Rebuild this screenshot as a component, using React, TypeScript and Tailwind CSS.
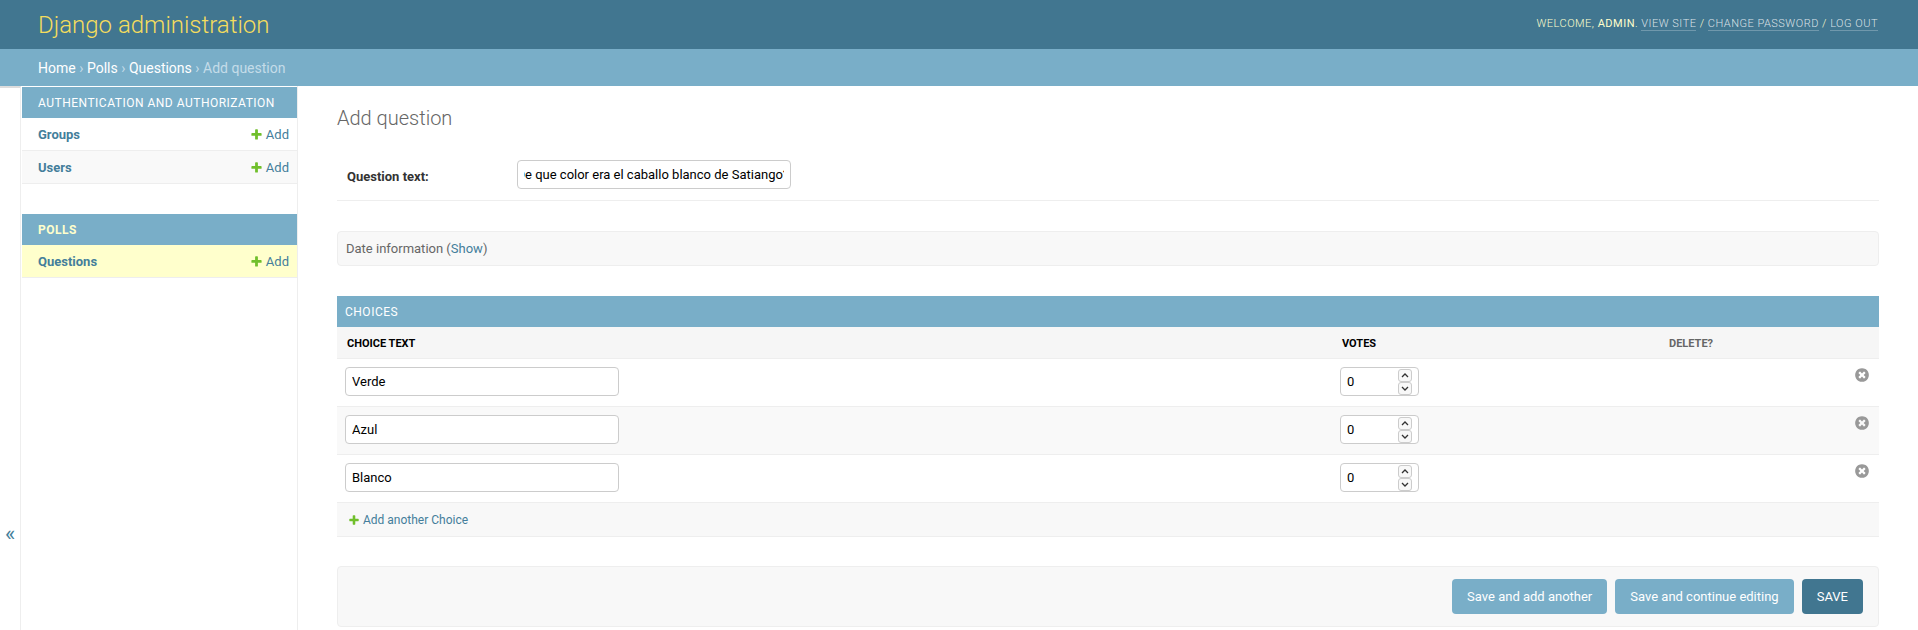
const PlusIcon = ({ className }: { className: string }) => (
  <svg viewBox="0 0 1792 1792" className={className}>
    <path
      fill="#70bf2b"
      d="M1600 796v192q0 40-28 68t-68 28h-416v416q0 40-28 68t-68 28h-192q-40 0-68-28t-28-68v-416h-416q-40 0-68-28t-28-68v-192q0-40 28-68t68-28h416v-416q0-40 28-68t68-28h192q40 0 68 28t28 68v416h416q40 0 68 28t28 68z"
    />
  </svg>
);

const DeleteIcon = () => (
  <svg viewBox="0 0 1792 1792" className="w-4 h-4">
    <path
      fill="#999999"
      d="M1277 1122q0-26-19-45l-181-181 181-181q19-19 19-45 0-27-19-46l-90-90q-19-19-46-19-26 0-45 19l-181 181-181-181q-19-19-45-19-27 0-46 19l-90 90q-19 19-19 46 0 26 19 45l181 181-181 181q-19 19-19 45 0 27 19 46l90 90q19 19 46 19 26 0 45-19l181-181 181 181q19 19 45 19 27 0 46-19l90-90q19-19 19-46zm387-226q0 209-103 385.5t-279.5 279.5-385.5 103-385.5-103-279.5-279.5-103-385.5 103-385.5 279.5-279.5 385.5-103 385.5 103 279.5 279.5 103 385.5z"
    />
  </svg>
);

const SidebarRow = ({ label, alt, active }: { label: string; alt?: boolean; active?: boolean }) => (
  <div
    className={`h-[33px] flex items-center justify-between pt-[2px] pl-4 pr-2 border-b border-[#eeeeee] ${
      active ? 'bg-[#ffffcc]' : alt ? 'bg-[#f9f9f9]' : 'bg-white'
    }`}
  >
    <a className="font-bold text-[#447e9b]">{label}</a>
    <a className="flex items-center gap-[3px] text-[#447e9b]">
      <PlusIcon className="w-[13px] h-[13px] -mt-0.5" />
      Add
    </a>
  </div>
);

const SpinnerButton = ({ up }: { up?: boolean }) => (
  <div className="w-[14px] h-[13px] flex items-center justify-center border border-[#cccccc] rounded-[3px] bg-[#f8f8f8]">
    <svg viewBox="0 0 8 5" className="w-2 h-[5px]" fill="none" stroke="#333333" strokeWidth="1.3">
      <path d={up ? 'M1 4 4 1l3 3' : 'M1 1l3 3 3-3'} />
    </svg>
  </div>
);

const ChoiceRow = ({ value, alt }: { value: string; alt?: boolean }) => (
  <div className={`h-12 grid grid-cols-[1003px_329px_1fr] border-b border-[#eeeeee] ${alt ? 'bg-[#f9f9f9]' : 'bg-white'}`}>
    <div className="pt-2 pl-2">
      <input
        readOnly
        value={value}
        className="w-[274px] h-[29px] px-1.5 bg-white text-black text-[13px] border border-[#cccccc] rounded outline-none"
      />
    </div>
    <div className="pt-2">
      <div className="w-[79px] h-[29px] flex items-center justify-between pl-1.5 pr-[6px] bg-white text-black border border-[#cccccc] rounded">
        <span>0</span>
        <div className="flex flex-col">
          <SpinnerButton up />
          <SpinnerButton />
        </div>
      </div>
    </div>
    <div className="pt-2 pr-[9px] flex justify-end items-start">
      <DeleteIcon />
    </div>
  </div>
);

export default function App() {
  return (
    <div className="w-[1918px] h-[630px] overflow-hidden bg-white text-[13px] text-[#333333] font-['Roboto',sans-serif] flex flex-col">
      {/* Header */}
      <div className="h-[49px] shrink-0 bg-[#417690] flex items-center justify-between pl-[38px] pr-[40px]">
        <h1 className="text-2xl font-light text-[#f5dd5d]">Django administration</h1>
        <div className="text-[11px] font-light uppercase tracking-[0.5px] text-[#ffffcc]">
          Welcome, <strong className="font-normal">admin</strong>.{' '}
          <a className="text-[#ffffffcc] border-b border-[#ffffff40]">View site</a> /{' '}
          <a className="text-[#ffffffcc] border-b border-[#ffffff40]">Change password</a> /{' '}
          <a className="text-[#ffffffcc] border-b border-[#ffffff40]">Log out</a>
        </div>
      </div>

      {/* Breadcrumbs */}
      <div className="h-[37px] shrink-0 bg-[#79aec8] flex items-center pl-[38px] text-sm text-[#c4dce8]">
        <span className="text-white">Home</span>
        <span className="mx-[3.5px]">›</span>
        <span className="text-white">Polls</span>
        <span className="mx-[3.5px]">›</span>
        <span className="text-white">Questions</span>
        <span className="mx-[3.5px]">›</span>
        Add question
      </div>

      <div className="flex flex-1 min-h-0">
        {/* Sidebar toggle */}
        <div className="w-[21px] shrink-0 border-r border-[#eeeeee] border-t-2 border-t-[#dddddd] pt-[435px] text-[#447e9b] text-[22px] leading-none pl-[5px]">
          «
        </div>

        {/* Sidebar */}
        <div className="w-[276px] ml-px shrink-0 pt-px border-r border-[#eeeeee]">
          <div className="h-[31px] flex items-center pl-4 bg-[#79aec8] text-white text-xs uppercase tracking-[0.5px]">
            Authentication and Authorization
          </div>
          <SidebarRow label="Groups" />
          <SidebarRow label="Users" alt />
          <div className="h-[30px]" />
          <div className="h-[31px] flex items-center pl-4 bg-[#79aec8] text-[#ffffcc] text-xs font-bold uppercase tracking-[0.5px]">
            Polls
          </div>
          <SidebarRow label="Questions" active />
        </div>

        {/* Main */}
        <div className="flex-1 pl-[39px] pr-[39px] min-w-0">
          <h2 className="pt-[18px] h-[56px] text-xl font-light text-[#666666]">Add question</h2>

          <div className="h-[59px] flex items-start pt-[18px] pl-[10px] border-b border-[#eeeeee]">
            <label className="w-[170px] pt-[7px] font-bold">Question text:</label>
            <div className="w-[274px] h-[29px] px-1.5 flex items-center bg-white text-black border border-[#cccccc] rounded">
              <div className="flex-1 flex justify-end overflow-hidden whitespace-nowrap">
                <span className="-mr-[5px]">¿De que color era el caballo blanco de Satiango?</span>
              </div>
            </div>
          </div>

          <div className="mt-[30px] h-[35px] flex items-center pl-2 bg-[#f8f8f8] border border-[#eeeeee] rounded text-[#666666]">
            <span>
              Date information (<a className="text-[#447e9b]">Show</a>)
            </span>
          </div>

          <div className="mt-[30px] h-[31px] flex items-center pl-2 bg-[#79aec8] text-white text-xs uppercase tracking-[0.5px]">
            Choices
          </div>

          <div className="h-[32px] grid grid-cols-[995px_327px_1fr] items-center pt-1 pl-2.5 bg-[#f6f6f6] border-b border-[#eeeeee] text-[11px] font-bold uppercase text-black">
            <span>Choice text</span>
            <span>Votes</span>
            <span className="text-[#666666]">Delete?</span>
          </div>

          <ChoiceRow value="Verde" />
          <ChoiceRow value="Azul" alt />
          <ChoiceRow value="Blanco" />

          <div className="h-[34px] flex items-center gap-[3px] pl-[11px] bg-[#f8f8f8] border-b border-[#eeeeee] text-xs text-[#447e9b]">
            <PlusIcon className="w-3 h-3" />
            Add another Choice
          </div>

          <div className="mt-[29px] h-[61px] flex items-center justify-end gap-2 pr-[15px] bg-[#f8f8f8] border border-[#eeeeee] rounded">
            <button className="h-[35px] px-[15px] bg-[#79aec8] text-white rounded">Save and add another</button>
            <button className="h-[35px] px-[15px] bg-[#79aec8] text-white rounded">Save and continue editing</button>
            <button className="h-[35px] px-[15px] bg-[#417690] text-white rounded uppercase">Save</button>
          </div>
        </div>
      </div>
    </div>
  );
}
